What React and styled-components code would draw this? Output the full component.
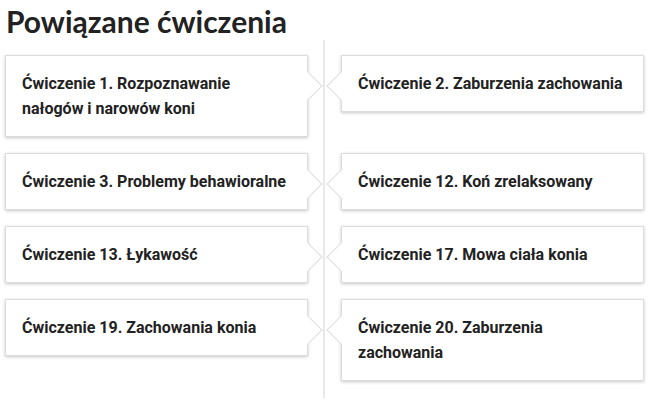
import React from 'react';
import styled, { createGlobalStyle } from 'styled-components';

const GlobalStyle = createGlobalStyle`
    html, body {
        margin: 0;
        padding: 0;
        background: #fff;
    }
    body {
        font-family: Roboto, "Liberation Sans", sans-serif;
        color: #222;
    }
`;

const Section = styled.section`
    width: 650px;
    padding: 0 6px 0 5px;
    box-sizing: border-box;
`;

const Title = styled.h2`
    margin: 0;
    padding: 4px 0 0 1px;
    height: 36px;
    font-family: Lato, "Open Sans", sans-serif;
    font-weight: 700;
    font-size: 30px;
    line-height: 34px;
    color: #222;
`;

const Timeline = styled.div`
    position: relative;
    display: grid;
    grid-template-columns: 303px 303px;
    column-gap: 33px;
    row-gap: 16px;
    align-items: start;
    padding: 15px 0 17px;

    /* pionowa linia osi */
    &::before{
        content: '';
        position: absolute;
        top: 0;
        bottom: 0;
        left: 318px;
        width: 2px;
        background: #e9e9e9;
    }
`;

const Card = styled.a`
    position: relative;
    display: block;
    padding: 15px 16px;
    background: #fff;
    border: 1px solid #dcdcdc;
    box-shadow: 0 1px 3px rgba(0, 0, 0, 0.22);
    font-size: 16px;
    font-weight: 700;
    line-height: 25px;
    color: #222;
    text-decoration: none;

    /* strzałka w stronę osi */
    &::after{
        content: '';
        position: absolute;
        top: 19px;
        width: 20px;
        height: 20px;
        background: #fff;
        border: 1px solid #dcdcdc;
        transform: rotate(45deg);
        ${props => props.side === 'left' ? `
            right: -11px;
            border-left-color: transparent;
            border-bottom-color: transparent;
        ` : `
            left: -11px;
            border-right-color: transparent;
            border-top-color: transparent;
        `}
    }
`;

const exercises = [
    'Ćwiczenie 1. Rozpoznawanie nałogów i narowów koni',
    'Ćwiczenie 2. Zaburzenia zachowania',
    'Ćwiczenie 3. Problemy behawioralne',
    'Ćwiczenie 12. Koń zrelaksowany',
    'Ćwiczenie 13. Łykawość',
    'Ćwiczenie 17. Mowa ciała konia',
    'Ćwiczenie 19. Zachowania konia',
    'Ćwiczenie 20. Zaburzenia zachowania',
];

const App = () => {
    return(
        <Section>
            <GlobalStyle />
            <Title>Powiązane ćwiczenia</Title>
            <Timeline>
                {exercises.map((name, i) => (
                    <Card key={name} href="#" side={i % 2 === 0 ? 'left' : 'right'}>{name}</Card>
                ))}
            </Timeline>
        </Section>
    )
}

export default App;
